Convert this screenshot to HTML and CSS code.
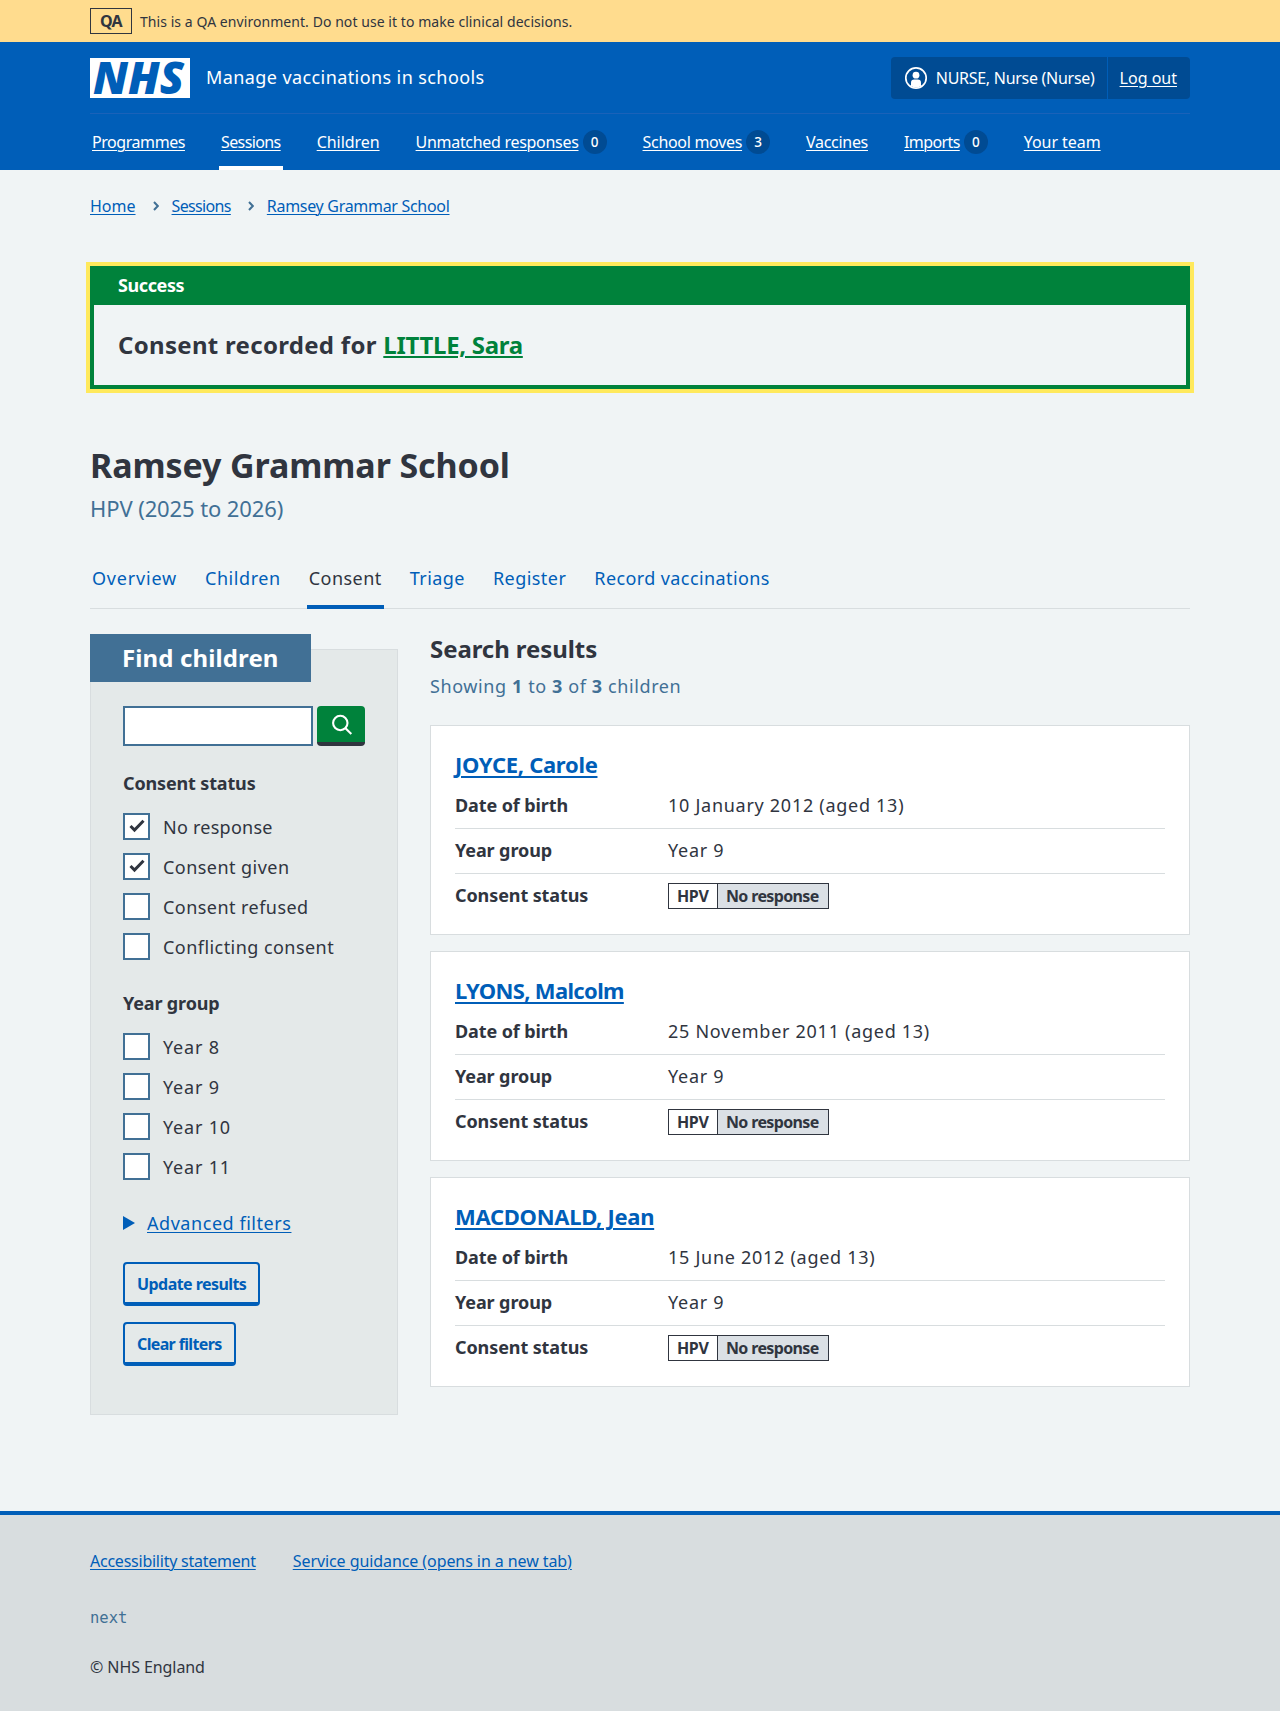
FILE: index.html
```html
<!DOCTYPE html>
<html lang="en">
<head>
<meta charset="utf-8">
<title>Ramsey Grammar School – Consent – Manage vaccinations in schools</title>
<link rel="stylesheet" href="styles.css">
</head>
<body>
<div class="environment">
  <div class="container environment-inner">
    <strong class="environment-tag">QA</strong>
    <span class="environment-text">This is a QA environment. Do not use it to make clinical decisions.</span>
  </div>
</div>

<header class="header">
  <div class="container">
    <div class="header-top">
      <a class="header-service" href="#">
        <svg class="logo" viewBox="0 0 100 40" width="100" height="40" role="img" aria-label="NHS">
          <rect width="100" height="40" fill="#fff"/>
          <text class="logo-text" x="3" y="36" textLength="91" lengthAdjust="spacingAndGlyphs">NHS</text>
        </svg>
        <span>Manage vaccinations in schools</span>
      </a>
      <div class="account">
        <div class="account-item">
          <svg width="24" height="24" viewBox="0 0 24 24" aria-hidden="true">
            <circle cx="12" cy="12" r="10.2" fill="none" stroke="#fff" stroke-width="1.7"/>
            <circle cx="12" cy="9.2" r="3.4" fill="#fff"/>
            <path d="M7 20v-3.2a3.3 3.3 0 0 1 3.3-3.3h3.4a3.3 3.3 0 0 1 3.3 3.3V20a9.5 9.5 0 0 1-10 0z" fill="#fff"/>
          </svg>
          <span>NURSE, Nurse (Nurse)</span>
        </div>
        <div class="account-item account-logout"><a href="#">Log out</a></div>
      </div>
    </div>
    <nav class="nav">
      <a class="nav-item" href="#"><span class="nav-label nav-tight">Programmes</span></a>
      <a class="nav-item nav-current" href="#"><span class="nav-label nav-tighter">Sessions</span></a>
      <a class="nav-item" href="#"><span class="nav-label nav-loose">Children</span></a>
      <a class="nav-item" href="#"><span class="nav-label">Unmatched responses</span><span class="count">0</span></a>
      <a class="nav-item" href="#"><span class="nav-label">School moves</span><span class="count">3</span></a>
      <a class="nav-item" href="#"><span class="nav-label">Vaccines</span></a>
      <a class="nav-item" href="#"><span class="nav-label nav-tighter">Imports</span><span class="count">0</span></a>
      <a class="nav-item" href="#"><span class="nav-label nav-loose">Your team</span></a>
    </nav>
  </div>
</header>

<div class="container">
  <nav class="breadcrumb">
    <a class="breadcrumb-home" href="#">Home</a>
    <svg class="chevron" width="6" height="10" viewBox="0 0 6 10" aria-hidden="true"><path d="M1 1l3.8 4L1 9"/></svg>
    <a class="nav-tighter" href="#">Sessions</a>
    <svg class="chevron" width="6" height="10" viewBox="0 0 6 10" aria-hidden="true"><path d="M1 1l3.8 4L1 9"/></svg>
    <a href="#">Ramsey Grammar School</a>
  </nav>

  <main>
    <section class="banner">
      <h2 class="banner-title">Success</h2>
      <p class="banner-body">Consent recorded for <a href="#">LITTLE, Sara</a></p>
    </section>

    <h1 class="title">Ramsey Grammar School</h1>
    <p class="caption">HPV (2025 to 2026)</p>

    <nav class="tabs">
      <a class="tab" href="#">Overview</a>
      <a class="tab" href="#">Children</a>
      <a class="tab tab-current" href="#">Consent</a>
      <a class="tab" href="#">Triage</a>
      <a class="tab" href="#">Register</a>
      <a class="tab" href="#">Record vaccinations</a>
    </nav>

    <div class="columns">
      <form class="filters">
        <h2 class="filters-title">Find children</h2>
        <div class="search">
          <input class="search-input" type="text" aria-label="Search">
          <button class="search-button" type="button" aria-label="Search">
            <svg width="22" height="22" viewBox="0 0 22 22" aria-hidden="true"><circle cx="9.3" cy="9" r="7.2"/><path d="M14.5 14.2l5.8 5.8"/></svg>
          </button>
        </div>

        <h3 class="group-title">Consent status</h3>
        <div class="group">
          <label class="check"><span class="box"><svg width="27" height="27" viewBox="0 0 27 27"><path d="M7.5 13l4 4 9-9.2"/></svg></span><span class="check-text check-tight">No response</span></label>
          <label class="check"><span class="box"><svg width="27" height="27" viewBox="0 0 27 27"><path d="M7.5 13l4 4 9-9.2"/></svg></span><span class="check-text">Consent given</span></label>
          <label class="check"><span class="box"></span><span class="check-text">Consent refused</span></label>
          <label class="check"><span class="box"></span><span class="check-text">Conflicting consent</span></label>
        </div>

        <h3 class="group-title">Year group</h3>
        <div class="group group-years">
          <label class="check"><span class="box"></span><span class="check-text">Year 8</span></label>
          <label class="check"><span class="box"></span><span class="check-text">Year 9</span></label>
          <label class="check"><span class="box"></span><span class="check-text">Year 10</span></label>
          <label class="check"><span class="box"></span><span class="check-text">Year 11</span></label>
        </div>

        <div class="advanced">
          <svg width="12" height="14" viewBox="0 0 12 14" aria-hidden="true"><path d="M0 0l12 7-12 7z"/></svg>
          <a href="#">Advanced filters</a>
        </div>

        <div class="actions">
          <button class="button" type="button">Update results</button>
          <button class="button button-tight" type="button">Clear filters</button>
        </div>
      </form>

      <section class="results">
        <h2 class="results-title">Search results</h2>
        <p class="results-count">Showing <b>1</b> to <b>3</b> of <b>3</b> children</p>

        <article class="card">
          <h3 class="card-title"><a href="#">JOYCE, Carole</a></h3>
          <dl class="summary">
            <div class="row"><dt>Date of birth</dt><dd>10 January 2012 (aged 13)</dd></div>
            <div class="row"><dt>Year group</dt><dd>Year 9</dd></div>
            <div class="row"><dt>Consent status</dt><dd><span class="tag"><span class="tag-name">HPV</span><span class="tag-status">No response</span></span></dd></div>
          </dl>
        </article>

        <article class="card">
          <h3 class="card-title card-title-tight"><a href="#">LYONS, Malcolm</a></h3>
          <dl class="summary">
            <div class="row"><dt>Date of birth</dt><dd>25 November 2011 (aged 13)</dd></div>
            <div class="row"><dt>Year group</dt><dd>Year 9</dd></div>
            <div class="row"><dt>Consent status</dt><dd><span class="tag"><span class="tag-name">HPV</span><span class="tag-status">No response</span></span></dd></div>
          </dl>
        </article>

        <article class="card">
          <h3 class="card-title"><a href="#">MACDONALD, Jean</a></h3>
          <dl class="summary">
            <div class="row"><dt>Date of birth</dt><dd>15 June 2012 (aged 13)</dd></div>
            <div class="row"><dt>Year group</dt><dd>Year 9</dd></div>
            <div class="row"><dt>Consent status</dt><dd><span class="tag"><span class="tag-name">HPV</span><span class="tag-status">No response</span></span></dd></div>
          </dl>
        </article>
      </section>
    </div>
  </main>
</div>

<footer class="footer">
  <div class="container">
    <div class="footer-links">
      <a class="footer-tight" href="#">Accessibility statement</a>
      <a href="#">Service guidance (opens in a new tab)</a>
    </div>
    <p class="version">next</p>
    <p class="copyright">© NHS England</p>
  </div>
</footer>
</body>
</html>
```
FILE: styles.css
```css
:root {
  --blue: #005eb8;
  --dark-blue: #004b93;
  --text: #30353f;
  --secondary: #417095;
  --green: #00823b;
  --border: #d8dddf;
}

* { box-sizing: border-box; }

body {
  margin: 0;
  background: #f0f4f5;
  color: var(--text);
  font-family: "Noto Sans", "Open Sans", sans-serif;
  font-size: 18px;
  line-height: 28px;
}

h1, h2, h3, p, dl, dd { margin: 0; }

a {
  color: var(--blue);
  text-decoration-thickness: 1px;
  text-underline-offset: 2px;
}

.container { width: 1100px; margin: 0 auto; }

/* Environment strip */
.environment { background: #ffdc8e; }
.environment-inner {
  display: flex;
  align-items: center;
  gap: 8px;
  height: 42px;
  font-size: 14px;
  letter-spacing: 0.06px;
}
.environment-text { padding-top: 2px; }
.environment-tag {
  width: 42px;
  height: 26px;
  border: 1px solid var(--text);
  font-size: 16px;
  font-weight: 700;
  line-height: 24px;
  text-align: center;
  letter-spacing: -0.7px;
}

/* Header */
.header { background: var(--blue); color: #fff; }
.header a { color: #fff; }
.header-top {
  display: flex;
  align-items: center;
  justify-content: space-between;
  height: 72px;
  border-bottom: 1px solid #1a62b9;
}
.header-service {
  display: flex;
  align-items: center;
  gap: 16px;
  text-decoration: none;
  letter-spacing: 0.41px;
  line-height: 26px;
}
.header-service span { padding-bottom: 2px; }
.logo { display: block; overflow: visible; }
.logo-text {
  fill: var(--blue);
  font-family: "Open Sans", sans-serif;
  font-size: 45px;
  font-style: italic;
  font-weight: 800;
  letter-spacing: 0;
}
.account {
  display: flex;
  height: 42px;
  border-radius: 4px;
  background: var(--dark-blue);
  font-size: 16px;
  letter-spacing: -0.28px;
}
.account-item {
  display: flex;
  align-items: center;
  gap: 8px;
  padding: 0 12px 0 13px;
}
.account-logout {
  border-left: 1px solid var(--blue);
  padding: 0 13px 0 12px;
  letter-spacing: 0;
}
.nav { display: flex; gap: 32px; height: 56px; }
.nav-item {
  display: flex;
  align-items: center;
  gap: 4px;
  padding: 4px 2px 0;
  border-bottom: 4px solid transparent;
  font-size: 16px;
  letter-spacing: -0.3px;
  text-decoration: none;
}
.nav-label {
  text-decoration: underline;
  text-decoration-thickness: 1px;
  text-underline-offset: 2px;
}
.nav-tight { letter-spacing: -0.44px; }
.nav-tighter { letter-spacing: -0.6px; }
.nav-loose { letter-spacing: -0.05px; }
.nav-current { border-bottom-color: #fff; }
.count {
  width: 24px;
  height: 24px;
  border-radius: 12px;
  background: var(--dark-blue);
  font-size: 13.5px;
  font-weight: 500;
  line-height: 25px;
  text-align: center;
}

/* Breadcrumb */
.breadcrumb {
  display: flex;
  align-items: center;
  padding-top: 24px;
  font-size: 16px;
  line-height: 24px;
  letter-spacing: -0.3px;
}
.breadcrumb-home { letter-spacing: 0; }
.breadcrumb .nav-tighter { letter-spacing: -0.65px; }
.chevron {
  margin: 0 13px 0 17px;
  fill: none;
  stroke: var(--secondary);
  stroke-width: 2;
}

/* Success banner */
.banner {
  margin-top: 48px;
  border: 4px solid var(--green);
  outline: 4px solid #ffe95c;
}
.banner-title {
  height: 35px;
  padding: 0 24px;
  background: var(--green);
  color: #fff;
  font-size: 18px;
  font-weight: 700;
  line-height: 30px;
  letter-spacing: -0.4px;
}
.banner-body {
  height: 80px;
  padding: 0 24px;
  font-size: 24px;
  font-weight: 700;
  line-height: 80px;
  letter-spacing: 0.3px;
}
.banner-body a {
  color: var(--green);
  letter-spacing: -0.3px;
  text-decoration-thickness: 2px;
}

/* Page heading */
.title {
  margin-top: 54px;
  font-size: 34px;
  font-weight: 700;
  line-height: 44px;
  letter-spacing: -0.1px;
}
.caption {
  margin-top: 4px;
  color: var(--secondary);
  font-size: 22px;
  line-height: 34px;
  letter-spacing: -0.1px;
}

/* Tabs */
.tabs {
  display: flex;
  gap: 24px;
  height: 60px;
  margin-top: 24px;
  box-shadow: inset 0 -1px var(--border);
}
.tab {
  padding: 15px 2px 0;
  border-bottom: 4px solid transparent;
  letter-spacing: 0.45px;
  text-decoration: none;
}
.tab:first-child { letter-spacing: 0.8px; }
.tab:nth-child(2) { letter-spacing: 0.58px; }
.tab:last-child { letter-spacing: 0.4px; }
.tab-current {
  border-bottom-color: var(--blue);
  color: var(--text);
}

.columns {
  display: grid;
  grid-template-columns: 308px 1fr;
  align-items: start;
  gap: 32px;
  margin-top: 25px;
}

/* Filters */
.filters {
  height: 766px;
  margin-top: 15px;
  padding: 0 32px;
  border: 1px solid var(--border);
  background: #e4e9e9;
}
.filters-title {
  width: 221px;
  margin: -16px 0 0 -33px;
  padding-left: 32px;
  background: var(--secondary);
  color: #fff;
  font-size: 24px;
  font-weight: 700;
  line-height: 48px;
  letter-spacing: 0.12px;
}
.search { display: flex; gap: 4px; margin-top: 24px; }
.search-input {
  width: 190px;
  height: 40px;
  padding: 4px;
  border: 2px solid var(--secondary);
  border-radius: 0;
  background: #fff;
}
.search-button {
  display: flex;
  justify-content: center;
  width: 48px;
  height: 40px;
  padding: 8px 0 0 2px;
  border: 0;
  border-bottom: 4px solid var(--text);
  border-radius: 4px;
  background: var(--green);
}
.search-button svg { fill: none; stroke: #fff; stroke-width: 2.1; }
.group-title {
  margin-top: 23px;
  font-size: 18px;
  font-weight: 700;
  letter-spacing: -0.15px;
}
.group { margin-top: 9px; }
.check {
  display: flex;
  align-items: center;
  gap: 13px;
  height: 40px;
  letter-spacing: 0.45px;
}
.check-text { padding-top: 2px; }
.check-tight { letter-spacing: 0.25px; }
.group-years .check { letter-spacing: 0.8px; }
.box {
  width: 27px;
  height: 27px;
  border: 2px solid var(--secondary);
  background: #fff;
}
.box svg {
  display: block;
  margin: -2px;
  fill: none;
  stroke: var(--text);
  stroke-width: 3;
}
.advanced {
  display: flex;
  align-items: center;
  gap: 12px;
  margin-top: 23px;
  letter-spacing: 0.55px;
}
.advanced svg { fill: var(--blue); }
.actions {
  display: flex;
  flex-direction: column;
  align-items: flex-start;
  gap: 16px;
  margin-top: 25px;
}
.button {
  height: 44px;
  padding: 2px 12px 0;
  border: 2px solid var(--blue);
  border-bottom-width: 4px;
  border-radius: 4px;
  background: transparent;
  color: var(--blue);
  font: 700 16px/36px "Noto Sans", "Open Sans", sans-serif;
  letter-spacing: -0.56px;
}
.button-tight { letter-spacing: -0.64px; }

/* Results */
.results-title {
  margin-top: -1px;
  font-size: 24px;
  font-weight: 700;
  line-height: 32px;
  letter-spacing: -0.08px;
}
.results-count {
  margin-top: 7px;
  color: var(--secondary);
  letter-spacing: 0.6px;
}
.results-count b { font-weight: 700; }
.card {
  height: 210px;
  padding: 23px 24px;
  border: 1px solid var(--border);
  background: #fff;
}
.card + .card { margin-top: 16px; }
.results-count + .card { margin-top: 25px; }
.card-title {
  font-size: 22px;
  font-weight: 700;
  line-height: 30px;
  letter-spacing: -0.3px;
}
.card-title-tight { letter-spacing: -0.65px; }
.card-title a {
  text-decoration-thickness: 2px;
  text-underline-offset: 3px;
}
.summary { margin-top: 5px; }
.row {
  display: grid;
  grid-template-columns: 213px 1fr;
  height: 45px;
  padding-top: 7px;
  border-bottom: 1px solid var(--border);
}
.row:last-child { border-bottom: 0; }
.row dt { font-weight: 700; letter-spacing: -0.1px; }
.row dd { letter-spacing: 0.72px; }
.tag {
  display: inline-flex;
  height: 26px;
  margin-top: 2px;
  border: 1px solid var(--text);
  font-size: 16px;
  font-weight: 700;
  line-height: 24px;
  letter-spacing: -0.65px;
}
.tag-name { width: 48px; padding-left: 8px; letter-spacing: -0.4px; }
.tag-status {
  width: 111px;
  padding-left: 8px;
  border-left: 1px solid var(--text);
  background: #dbe0e5;
}

/* Footer */
.footer {
  height: 200px;
  margin-top: 96px;
  padding-top: 34px;
  border-top: 4px solid var(--blue);
  background: var(--border);
  font-size: 16px;
  line-height: 24px;
}
.footer-links { display: flex; gap: 37px; letter-spacing: -0.08px; }
.footer-tight { letter-spacing: -0.24px; }
.version {
  margin-top: 33px;
  color: var(--secondary);
  font-family: "DejaVu Sans Mono", monospace;
  font-size: 15.5px;
}
.copyright { margin-top: 25px; letter-spacing: -0.08px; }
```
